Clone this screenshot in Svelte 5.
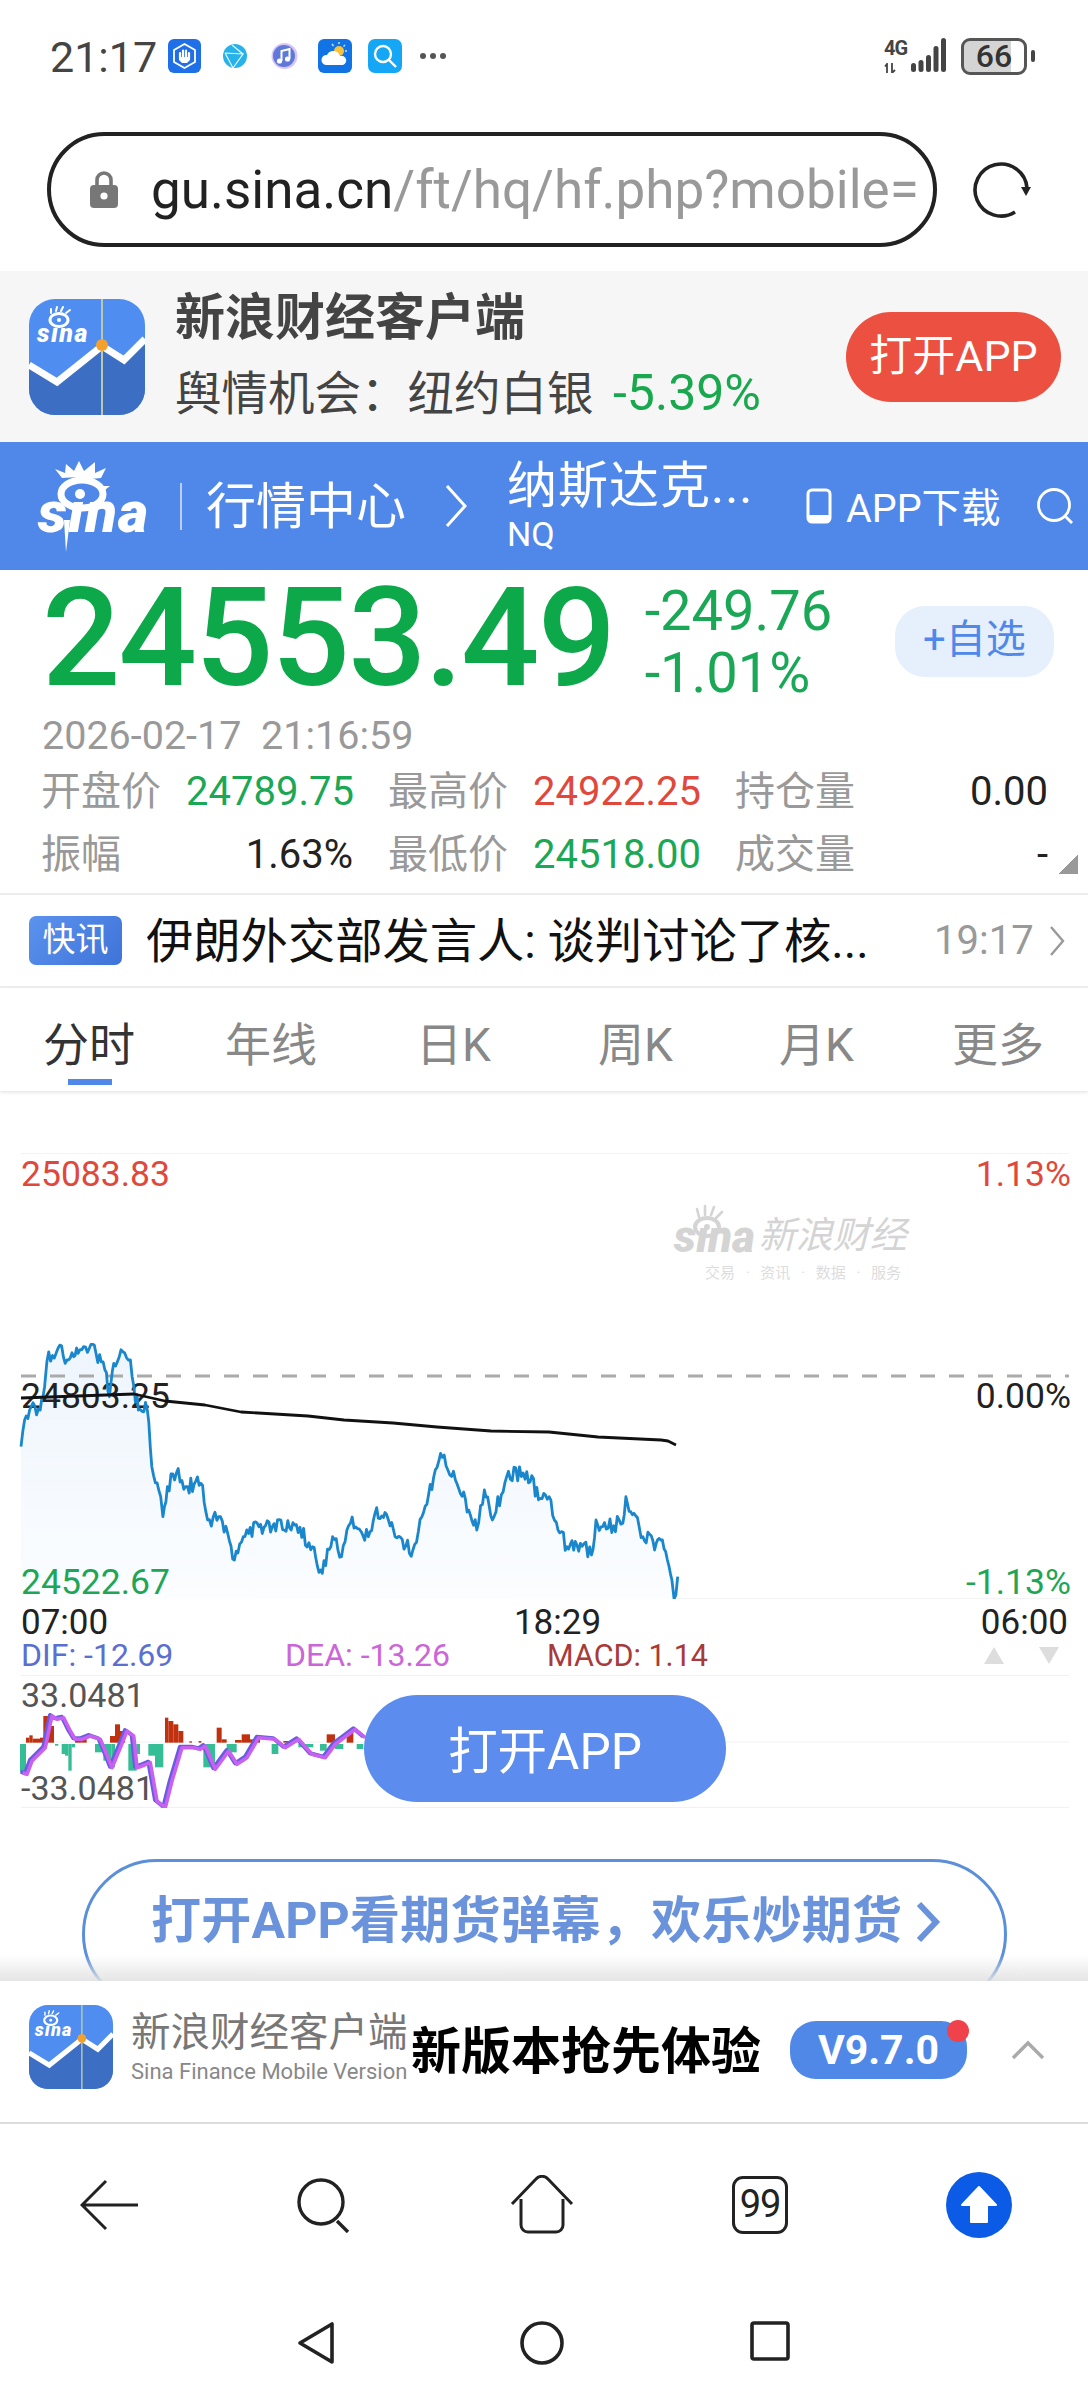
<script>
  // ---- price line, traced from the reference (trace units: x/2.24, y/3 + offset)
  const blueKeys = [[47,380],[55,300],[70,260],[90,270],[100,200],[105,125],[130,85],[150,120],[165,110],[175,100],[200,85],[215,100],[235,150],[245,230],[255,130],[275,95],[292,120],[300,200],[310,270],[330,270],[340,440],[360,530],[365,590],[375,500],[395,460],[420,500],[450,490],[465,600],[490,590],[510,640],[525,720],[545,650],[580,620],[610,620],[660,615],[700,680],[722,760],[745,650],[765,710],[785,610],[825,650],[840,580],[870,600],[885,650],[925,690],[945,590],[975,450],[995,405],[1020,480],[1050,570],[1068,630],[1085,510],[1103,600],[1135,470],[1180,455],[1210,535],[1230,530],[1250,630],[1270,680],[1300,670],[1325,705],[1335,600],[1350,620],[1395,610],[1402,530],[1420,580],[1440,650],[1470,670],[1480,660],[1495,720],[1505,780],[1510,840],[1518,770]];
  let seed = 48271;
  const rnd = () => { seed = (seed * 16807) % 2147483647; return seed / 2147483647; };
  const pts = [];
  for (let i = 0; i < blueKeys.length - 1; i++) {
    const [x0, y0] = blueKeys[i];
    const [x1, y1] = blueKeys[i + 1];
    const n = Math.max(1, Math.round((x1 - x0) / 4));
    for (let j = 0; j < n; j++) {
      const t = j / n;
      const jitter = j === 0 ? 0 : (rnd() - 0.5) * 48;
      pts.push([x0 + (x1 - x0) * t, y0 + (y1 - y0) * t + jitter]);
    }
  }
  pts.push(blueKeys[blueKeys.length - 1]);
  // price chart svg spans page y 1153..1599, x 0..1088
  const map = ([x, y]) => [(x / 2.24).toFixed(1), Math.min(y / 3 + 1320 - 1153, 446).toFixed(1)];
  const bluePath = pts.map(map).map((p) => p.join(',')).join(' ');
  const fillPath = `21,446 ${bluePath} 678,446`;
  const blackLine = [[21,245],[134,241],[165,248],[205,252],[241,259],[308,263],[344,267],[393,270],[437,274],[491,278],[549,279],[598,284],[661,287],[668,288],[676,292]].map((p) => p.join(',')).join(' ');

  // MACD, traced in units x/3, y/3 within an svg from page y 1675
  const redBars = [[78,88,15],[88,98,22],[98,120,12],[120,130,15],[130,150,80],[150,162,50],[225,245,8],[245,260,12],[330,345,20],[345,360,55],[360,375,35],[495,505,75],[505,520,65],[520,535,55],[535,550,35],[568,576,4],[596,604,5],[650,665,45],[665,680,10],[705,725,8],[725,750,25],[750,780,10],[850,870,5],[980,1005,25],[1040,1060,35]];
  const tealBars = [[60,78,85],[165,175,5],[185,195,30],[195,205,35],[205,215,80],[215,225,10],[285,310,25],[310,335,50],[335,345,70],[385,410,80],[410,420,30],[445,465,35],[465,490,70],[610,645,70],[680,710,25],[815,835,30],[895,940,10],[960,980,20],[1005,1030,15],[1070,1090,15]];
  const macdLine = [[62,395],[75,400],[90,360],[130,320],[150,225],[165,235],[185,230],[205,270],[220,295],[240,295],[265,285],[295,295],[310,330],[330,380],[355,320],[375,270],[395,285],[405,380],[420,375],[445,365],[465,480],[490,500],[510,420],[540,320],[575,320],[595,325],[610,315],[640,385],[680,330],[705,370],[735,350],[770,290],[820,295],[850,320],[890,295],[930,340],[970,350],[1000,310],[1060,265],[1090,290]];
  const my = (y) => (y / 3 + 1640 - 1675).toFixed(1);
  const base = 308;
  const dif = macdLine.map(([x, y]) => `${(x / 3).toFixed(1)},${my(y)}`).join(' ');
  const dea = macdLine.map(([x, y]) => `${(x / 3 + 2).toFixed(1)},${my(y + 3)}`).join(' ');

  const tabs = ['分时', '年线', '日K', '周K', '月K', '更多'];
</script>

{#snippet appIcon()}
  <svg class="appicon" viewBox="0 0 116 116">
    <defs>
      <clipPath id="ic"><rect width="116" height="116" rx="26" /></clipPath>
    </defs>
    <g clip-path="url(#ic)">
      <rect width="116" height="116" fill="#4f8df0" />
      <path d="M0 68 L28 84 L73 47 L95 61 L116 40 V116 H0Z" fill="#3c6fc3" />
      <path d="M0 66 L28 83 L73 47 L95 61 L116 40" fill="none" stroke="#fff" stroke-width="7" />
      <rect x="72" width="2" height="116" fill="#b9c9b0" />
      <circle cx="73" cy="46" r="6" fill="#f2a12c" />
      <ellipse cx="30" cy="21" rx="9" ry="6.5" fill="none" stroke="#fff" stroke-width="3" />
      <circle cx="30" cy="21" r="2" fill="#fff" />
      <path d="M22 14 L22 10 M27 12 L28 8 M32 12 L34 8 M37 14 L41 11" stroke="#fff" stroke-width="2" stroke-linecap="round" />
      <text x="8" y="43" class="icontext">sına</text>
    </g>
  </svg>
{/snippet}

{#snippet sinaLogo()}
  <div class="logo">
    <svg class="eye" viewBox="0 0 108 93">
      <ellipse cx="44" cy="34" rx="21" ry="14" fill="none" stroke="#fff" stroke-width="7" />
      <circle cx="42" cy="34" r="5" fill="#fff" />
      <path d="M24 18 L17 9 L27 13 L28 4 L36 11 L41 1 L46 11 L57 2 L57 13 L68 8 L63 18 L52 19 L40 17Z M64 26 L72 26 L63 33Z" fill="#fff" />
      <path d="M26 60 H32 L28 92Z" fill="#fff" />
    </svg>
    <span class="logotext">sına</span>
  </div>
{/snippet}

<div class="page">
  <header class="status">
    <span class="time">21:17</span>
    <div class="noti">
      <svg class="n1" width="33" height="34" viewBox="0 0 33 34"><rect width="33" height="34" rx="6" fill="#1f6fe8" /><path d="M16.5 5 L27 11 V23 L16.5 29 L6 23 V11Z" fill="none" stroke="#fff" stroke-width="1.8" /><path d="M12 20 V14 M15 20 V11.5 M18 20 V11.5 M21 20 V14" stroke="#fff" stroke-width="2.2" stroke-linecap="round" /><path d="M11 18 H22 V21 L19 24 H14 L11 21Z" fill="#fff" /></svg>
      <svg class="n2" width="24" height="26" viewBox="0 0 24 26"><circle cx="12" cy="13" r="12" fill="#27b3ea" /><path d="M2 10 L20 11 L10 25 M9 2 L20 11 M2 10 L10 25" stroke="#e8f8ff" stroke-width="1.2" fill="none" /></svg>
      <svg class="n3" width="27" height="26" viewBox="0 0 27 26"><circle cx="13.5" cy="13" r="13" fill="#d9c6f5" /><circle cx="13" cy="13" r="11" fill="#5f79d8" /><path d="M10.5 18 V8 L18.5 6 V16" stroke="#fff" stroke-width="2" fill="none" /><circle cx="8.5" cy="18" r="2.6" fill="#fff" /><circle cx="16.5" cy="16" r="2.6" fill="#fff" /></svg>
      <svg class="n4" width="34" height="34" viewBox="0 0 34 34"><rect width="34" height="34" rx="6" fill="#1274e4" /><circle cx="21" cy="12" r="5" fill="#f8c23a" /><path d="M21 3 V5 M29 12 H27 M27 6 L25.5 7.5 M14 5 L15.5 7" stroke="#cfe4fa" stroke-width="1.4" /><path d="M8 26 a5 5 0 0 1 1 -10 a7 7 0 0 1 13 1 a4.5 4.5 0 0 1 3 9Z" fill="#fff" /></svg>
      <svg class="n5" width="34" height="34" viewBox="0 0 34 34"><rect width="34" height="34" rx="7" fill="#15a6f5" /><circle cx="15" cy="15" r="8" fill="none" stroke="#fff" stroke-width="2.4" /><path d="M21 21 L28 28" stroke="#fff" stroke-width="2.4" /></svg>
      <span class="dots"><i></i><i></i><i></i></span>
    </div>
    <div class="sys">
      <div class="net"><span>4G</span><svg width="24" height="10" viewBox="0 0 24 10"><path d="M3 10 V1 L1 3.5 M8 0 V10 L11 7" stroke="#444" stroke-width="1.8" fill="none" /></svg></div>
      <svg class="bars" width="36" height="34" viewBox="0 0 36 34"><rect x="0" y="25" width="5" height="9" rx="2.5" fill="#444" /><rect x="7.5" y="22" width="5" height="12" rx="2.5" fill="#444" /><rect x="15" y="17" width="5" height="17" rx="2.5" fill="#444" /><rect x="22.5" y="8" width="5" height="26" rx="2.5" fill="#444" /><rect x="30" y="0" width="5" height="34" rx="2.5" fill="#444" /></svg>
      <div class="batt"><span>66</span></div><i class="nub"></i>
    </div>
  </header>

  <div class="urlrow">
    <div class="urlbar">
      <svg class="lock" width="28" height="37" viewBox="0 0 28 37"><path d="M7 16 V9 a7 7 0 0 1 14 0 V16" fill="none" stroke="#777" stroke-width="3.6" /><rect y="14" width="28" height="23" rx="4" fill="#777" /><circle cx="14" cy="25" r="3.6" fill="#fff" /></svg>
      <span class="url"><b>gu.sina.cn</b>/ft/hq/hf.php?mobile=</span>
    </div>
    <svg class="reload" width="60" height="60" viewBox="0 0 60 60"><path d="M56 28 A26 26 0 1 0 44 52" fill="none" stroke="#222" stroke-width="3.6" /><path d="M50 27 L60 27 L55 36Z" fill="#222" /></svg>
  </div>

  <section class="banner">
    {@render appIcon()}
    <div class="bannertext">
      <div class="btitle">新浪财经客户端</div>
      <div class="bsub">舆情机会：纽约白银 <em>-5.39%</em></div>
    </div>
    <div class="openred">打开APP</div>
  </section>

  <nav class="bluenav">
    {@render sinaLogo()}
    <i class="vdiv"></i>
    <span class="crumb">行情中心</span>
    <svg class="cchev" width="24" height="44" viewBox="0 0 24 44"><path d="M3 2 L21 22 L3 42" fill="none" stroke="#fff" stroke-width="3" /></svg>
    <div class="crumbname"><div class="cn">纳斯达克...</div><div class="nq">NQ</div></div>
    <svg class="phone" width="26" height="36" viewBox="0 0 26 36"><rect x="2" y="2" width="22" height="32" rx="4" fill="none" stroke="#fff" stroke-width="3" /><rect x="2" y="27" width="22" height="7" fill="#fff" /></svg>
    <span class="dl">APP下载</span>
    <svg class="nsearch" width="38" height="38" viewBox="0 0 38 38"><circle cx="18" cy="18" r="15.5" fill="none" stroke="#fff" stroke-width="2.8" /><path d="M29 29 L36 36" stroke="#fff" stroke-width="2.8" /></svg>
  </nav>

  <section class="quote">
    <div class="qtop">
      <div class="bignum">24553.49</div>
      <div class="delta"><div>-249.76</div><div>-1.01%</div></div>
      <div class="addbtn">+自选</div>
    </div>
    <div class="stamp">2026-02-17&nbsp;&nbsp;21:16:59</div>
    <div class="stats">
      <span class="k">开盘价</span><span class="v g">24789.75</span>
      <span class="k">最高价</span><span class="v r">24922.25</span>
      <span class="k">持仓量</span><span class="v">0.00</span>
      <span class="k">振幅</span><span class="v">1.63%</span>
      <span class="k">最低价</span><span class="v g">24518.00</span>
      <span class="k">成交量</span><span class="v">-</span>
    </div>
    <i class="corner"></i>
  </section>

  <section class="news">
    <span class="flash">快讯</span>
    <span class="headline">伊朗外交部发言人: 谈判讨论了核...</span>
    <span class="ntime">19:17</span>
    <svg width="16" height="32" viewBox="0 0 16 32"><path d="M2 2 L14 16 L2 30" fill="none" stroke="#999" stroke-width="2.4" /></svg>
  </section>

  <div class="tabs">
    {#each tabs as t, i}
      <div class="tab" class:on={i === 0}>{t}</div>
    {/each}
  </div>

  <section class="chartarea">
    <div class="pricechart">
      <svg class="layer" width="1088" height="446" viewBox="0 0 1088 446">
        <defs>
          <linearGradient id="fade" x1="0" y1="0" x2="0" y2="1"><stop offset="0" stop-color="#eef5fd" /><stop offset="1" stop-color="#fbfdff" /></linearGradient>
        </defs>
        <path d="M21 .5 H1069 M21 445.5 H1069" stroke="#f3f3f3" fill="none" />
        <polygon points={fillPath} fill="url(#fade)" />
        <path d="M21 223 H1069" stroke="#aaa" stroke-width="3" stroke-dasharray="15 14" />
      </svg>
      <div class="wm">
        <svg class="wmeye" width="36" height="36" viewBox="0 0 36 36"><ellipse cx="17" cy="23" rx="12" ry="9" fill="none" stroke="#d4d4d4" stroke-width="4" /><circle cx="17" cy="23" r="3" fill="#d4d4d4" /><path d="M9 13 L7 5 M15 11 L15 2 M21 11 L24 3 M26 14 L32 8" stroke="#d4d4d4" stroke-width="2.6" stroke-linecap="round" /></svg>
        <div class="wm1"><span class="wmlogo">sına</span><span class="wmcn">新浪财经</span></div>
        <div class="wm2">交易 · 资讯 · 数据 · 服务</div>
      </div>
      <div class="ylabels">
        <div class="yrow red"><span>25083.83</span><span>1.13%</span></div>
        <div class="yrow mid"><span>24803.25</span><span>0.00%</span></div>
        <div class="yrow grn"><span>24522.67</span><span>-1.13%</span></div>
      </div>
      <svg class="layer" width="1088" height="446" viewBox="0 0 1088 446">
        <polyline points={bluePath} fill="none" stroke="#1a86cc" stroke-width="2.8" stroke-linejoin="round" />
        <polyline points={blackLine} fill="none" stroke="#111" stroke-width="2.8" stroke-linejoin="round" />
      </svg>
    </div>
    <div class="xaxis"><span>07:00</span><span class="xm">18:29</span><span>06:00</span></div>
    <div class="legend">
      <span class="dif">DIF: -12.69</span><span class="dea">DEA: -13.26</span><span class="macd">MACD: 1.14</span>
      <i class="up"></i><i class="down"></i>
    </div>
    <div class="macdchart">
      <div class="mlabels"><span>33.0481</span><span>-33.0481</span></div>
      <svg class="layer" width="1088" height="133" viewBox="0 0 1088 133">
        <path d="M21 .5 H1069 M21 132.5 H1069 M21 67 H1069" stroke="#f1f1f1" fill="none" />
        {#each redBars as [a, b, h]}
          <rect x={a / 3} y={(base - h) / 3 + 1640 - 1675} width={(b - a) / 3} height={h / 3} fill="#c0320f" />
        {/each}
        {#each tealBars as [a, b, h]}
          <rect x={a / 3} y={(base + 4) / 3 + 1640 - 1675} width={(b - a) / 3} height={h / 3} fill="#35bd96" />
        {/each}
        <polyline points={dif} fill="none" stroke="#6a5ce0" stroke-width="4" stroke-linejoin="round" />
        <polyline points={dea} fill="none" stroke="#c860f0" stroke-width="3.6" stroke-linejoin="round" />
      </svg>
      <div class="openblue">打开APP</div>
    </div>
    <div class="promo">
      <span>打开APP看期货弹幕，欢乐炒期货</span>
      <svg width="26" height="42" viewBox="0 0 26 42"><path d="M4 3 L21 21 L4 39" fill="none" stroke="#6a93dc" stroke-width="6" /></svg>
    </div>
    <div class="fadeedge"></div>
  </section>

  <section class="appstrip">
    {@render appIcon()}
    <div class="striptext">
      <div class="s1">新浪财经客户端</div>
      <div class="s2">Sina Finance Mobile Version</div>
    </div>
    <div class="s3">新版本抢先体验</div>
    <div class="ver">V9.7.0<i></i></div>
    <svg class="sup" width="34" height="20" viewBox="0 0 34 20"><path d="M2 18 L17 3 L32 18" fill="none" stroke="#aaa" stroke-width="3.4" /></svg>
  </section>

  <footer class="browsernav">
    <svg width="58" height="52" viewBox="0 0 58 52"><path d="M26 2 L2 26 L26 50 M2 26 H58" fill="none" stroke="#222" stroke-width="3" /></svg>
    <svg width="56" height="56" viewBox="0 0 56 56"><circle cx="25" cy="25" r="22" fill="none" stroke="#222" stroke-width="3.4" /><path d="M41 44 L52 55" stroke="#222" stroke-width="3.4" /></svg>
    <svg width="64" height="60" viewBox="0 0 64 60"><path d="M2 29 L26 4 a8 8 0 0 1 12 0 L62 29 M11 24 V50 a7 7 0 0 0 7 7 H46 a7 7 0 0 0 7 -7 V24" fill="none" stroke="#222" stroke-width="3" stroke-linejoin="round" /></svg>
    <div class="tabsbtn">99</div>
    <svg width="66" height="66" viewBox="0 0 66 66"><circle cx="33" cy="33" r="33" fill="#0b5be6" /><path d="M33 15 L50 33 H41 V50 H25 V33 H16Z" fill="#fff" stroke="#fff" stroke-width="2" stroke-linejoin="round" /></svg>
  </footer>

  <div class="androidnav">
    <svg width="37" height="44" viewBox="0 0 37 44"><path d="M35 3 V41 L3 22Z" fill="none" stroke="#222" stroke-width="3.6" stroke-linejoin="round" /></svg>
    <svg width="44" height="44" viewBox="0 0 44 44"><circle cx="22" cy="22" r="20" fill="none" stroke="#222" stroke-width="3.6" /></svg>
    <svg width="40" height="40" viewBox="0 0 40 40"><rect x="2" y="2" width="36" height="36" rx="2" fill="none" stroke="#222" stroke-width="3.6" /></svg>
  </div>
</div>

<style>
  :global(body) { margin: 0; background: #fff; }
  .page {
    width: 1088px; height: 2400px; overflow: hidden; background: #fff;
    font-family: Roboto, "Noto Sans CJK SC", sans-serif; color: #222;
    display: flex; flex-direction: column;
  }
  .page > * { flex: none; box-sizing: border-box; }
  i { display: block; font-style: normal; }

  /* status */
  .status { height: 88px; padding: 36px 53px 0 50px; display: flex; align-items: flex-start; }
  .time { font-size: 43px; line-height: 42px; color: #444; width: 118px; }
  .noti { display: flex; align-items: center; height: 36px; margin-top: 2px; }
  .n1 { margin-right: 22px; }
  .n2 { margin-right: 24px; }
  .n3 { margin-right: 20px; }
  .n4 { margin-right: 16px; }
  .n5 { margin-right: 18px; }
  .dots { display: flex; gap: 4px; }
  .dots i { width: 6px; height: 6px; border-radius: 50%; background: #555; }
  .sys { margin-left: auto; display: flex; align-items: flex-start; padding-top: 2px; }
  .net { width: 27px; font-size: 20px; font-weight: 700; line-height: 20px; color: #444; letter-spacing: -1px; white-space: nowrap; }
  .net svg { display: block; margin-top: 5px; }
  .bars { margin-right: 14px; }
  .batt { width: 66px; height: 37px; box-sizing: border-box; border: 3px solid #555; border-radius: 9px; background: linear-gradient(90deg, #d4d4d4 78%, #fff 78%); background-clip: padding-box; font-size: 32px; font-weight: 500; line-height: 31px; text-align: center; color: #333; }
  .nub { width: 4px; height: 12px; margin: 12px 0 0 4px; border-radius: 2px; background: #444; }

  /* url */
  .urlrow { height: 183px; display: flex; align-items: center; padding: 20px 0 0 47px; }
  .urlbar { width: 890px; height: 115px; box-sizing: border-box; border: 4px solid #222; border-radius: 58px; display: flex; align-items: center; padding-left: 39px; }
  .lock { flex: none; }
  .url { margin-left: 33px; font-size: 53px; color: #999; white-space: nowrap; font-weight: 400; }
  .url b { font-weight: 400; color: #222; }
  .reload { margin-left: 34px; }

  /* banner */
  .banner { height: 171px; background: #f6f6f6; display: flex; align-items: center; padding: 0 27px 0 29px; }
  .banner .appicon { width: 116px; height: 116px; flex: none; }
  .appicon { display: block; }
  .icontext { font: italic 900 25px Roboto, sans-serif; fill: #fff; letter-spacing: 1.5px; }
  .bannertext { margin-left: 30px; }
  .btitle { font-size: 50px; font-weight: 700; line-height: 66px; color: #444; }
  .bsub { font-size: 46.5px; line-height: 70px; color: #444; white-space: nowrap; margin-top: 7px; }
  .bsub em { font-style: normal; color: #19a84d; font-size: 50px; margin-left: 8px; }
  .openred { margin-left: auto; width: 215px; height: 90px; border-radius: 45px; background: #ec5040; color: #fff; font-size: 43px; line-height: 88px; text-align: center; }

  /* blue nav */
  .bluenav { height: 128px; background: #5088ea; color: #fff; display: flex; align-items: center; padding-left: 38px; }
  .logo { width: 110px; height: 93px; position: relative; flex: none; }
  .eye { position: absolute; left: 0; top: 0; width: 108px; height: 93px; }
  .logotext { position: absolute; left: 0; top: 23px; font: italic 900 58px/58px Roboto, sans-serif; color: #fff; letter-spacing: 1.2px; white-space: nowrap; }
  .vdiv { width: 2px; height: 47px; background: rgba(255,255,255,.6); margin-left: 32px; }
  .crumb { margin-left: 24px; font-size: 50px; width: 238px; white-space: nowrap; padding-bottom: 8px; }
  .cchev { margin-right: 39px; }
  .crumbname { width: 299px; }
  .cn { font-size: 50px; line-height: 56px; white-space: nowrap; letter-spacing: 1px; }
  .nq { font-size: 34px; line-height: 40px; }
  .dl { font-size: 39.5px; margin-left: 14px; width: 190px; white-space: nowrap; padding-bottom: 4px; }

  /* quote */
  .quote { height: 325px; border-bottom: 2px solid #ececec; padding: 0 34px 0 42px; position: relative; }
  .qtop { height: 136px; display: flex; align-items: flex-start; }
  .bignum { font-size: 138px; line-height: 136px; font-weight: 500; color: #0da84a; width: 600px; letter-spacing: -1.9px; white-space: nowrap; }
  .delta { font-size: 56px; line-height: 62px; color: #1aa857; width: 256px; padding: 10px 0 0 5px; box-sizing: border-box; }
  .addbtn { width: 160px; height: 71px; margin-top: 36px; border-radius: 30px; background: #e6effc; color: #5088ea; font-size: 40px; line-height: 68px; text-align: center; }
  .stamp { font-size: 39.5px; line-height: 44px; color: #999; margin-top: 8px; }
  .stats { display: grid; grid-template-columns: 144px 203px 144px 203px 144px 168px; margin-top: 2px; font-size: 40px; line-height: 63px; }
  .k { color: #999; font-size: 40px; white-space: nowrap; margin-left: -1px; }
  .v { text-align: right; padding-right: 36px; color: #222; white-space: nowrap; }
  .v:nth-child(6n) { padding-right: 0; }
  .v.g { color: #1aa857; }
  .v.r { color: #e0483c; }
  .corner { position: absolute; right: 10px; bottom: 19px; width: 19px; height: 19px; background: linear-gradient(135deg, transparent 50%, #999 50%); }

  /* news */
  .news { height: 93px; display: flex; align-items: center; padding-left: 29px; border-bottom: 2px solid #ececec; }
  .flash { width: 93px; height: 49px; border-radius: 7px; background: linear-gradient(135deg, #5b93ee, #3f73d8); color: #fff; font-size: 33px; line-height: 48px; text-align: center; flex: none; }
  .headline { margin-left: 24px; width: 788px; font-size: 47.3px; color: #111; white-space: nowrap; padding-bottom: 6px; }
  .ntime { font-size: 40px; color: #999; width: 115px; }

  /* tabs */
  .tabs { height: 103px; padding-left: 43px; display: grid; grid-template-columns: 182px 191px 182px 181px 173px auto; box-shadow: 0 2px 3px #e9e9e9; position: relative; }
  .tab { font-size: 46px; line-height: 114px; color: #888; position: relative; height: 101px; white-space: nowrap; }
  .tab.on { color: #333; }
  .tab.on::after { content: ''; position: absolute; left: 25px; width: 44px; bottom: 4px; height: 6px; background: #5088ea; }

  /* charts */
  .chartarea { height: 890px; padding-top: 62px; position: relative; overflow: hidden; }
  .pricechart { height: 446px; position: relative; }
  .layer { position: absolute; left: 0; top: 0; }
  .ylabels { position: relative; padding: 0 17px 0 21px; font-size: 35.5px; line-height: 40px; height: 446px; display: flex; flex-direction: column; }
  .yrow { display: flex; justify-content: space-between; }
  .red { color: #e0483c; margin-top: 1px; }
  .mid { color: #222; margin-top: 182px; }
  .grn { color: #1ea656; margin-top: 146px; }
  .wm { position: absolute; left: 674px; top: 52px; color: #d4d4d4; width: 240px; }
  .wmeye { position: absolute; left: 16px; top: -1px; }
  .wm1 { display: flex; align-items: flex-end; height: 56px; padding-top: 2px; box-sizing: border-box; }
  .wmlogo { font: italic 900 44px/48px Roboto, sans-serif; }
  .wmcn { font-size: 37px; line-height: 50px; font-style: italic; margin-left: 4px; white-space: nowrap; }
  .wm2 { font-size: 15px; line-height: 18px; margin: 3px 0 0 31px; color: #ddd; word-spacing: 7px; white-space: nowrap; }
  .xaxis { height: 37px; padding: 0 20px 0 21px; display: flex; justify-content: space-between; font-size: 35px; line-height: 48px; color: #222; }
  .xm { margin-left: 26px; }
  .legend { height: 39px; padding: 0 29px 0 21px; display: flex; align-items: center; font-size: 32px; line-height: 39px; }
  .dif { color: #5b6fd0; width: 264px; }
  .dea { color: #cc66d8; width: 262px; }
  .macd { color: #a83a3a; font-size: 30.5px; }
  .up, .down { width: 0; height: 0; border-left: 10px solid transparent; border-right: 10px solid transparent; }
  .up { border-bottom: 17px solid #ddd; margin-left: auto; }
  .down { border-top: 17px solid #ddd; margin-left: 35px; }
  .macdchart { height: 133px; position: relative; }
  .mlabels { position: relative; padding: 3px 0 0 21px; height: 130px; display: flex; flex-direction: column; justify-content: space-between; font-size: 34px; line-height: 34px; color: #555; align-items: flex-start; box-sizing: border-box; }
  .openblue { position: absolute; left: 364px; top: 20px; width: 362px; height: 107px; border-radius: 54px; background: #5b8cee; color: #fff; font-size: 49.5px; line-height: 114px; text-align: center; }
  .promo { width: 925px; height: 150px; box-sizing: border-box; margin: 51px 0 0 82px; border: 3px solid #5b8fd9; border-radius: 75px; display: flex; align-items: flex-start; padding: 29px 0 0 66px; }
  .promo span { font-size: 50px; line-height: 60px; font-weight: 700; color: #6a93dc; white-space: nowrap; width: 764px; letter-spacing: .2px; }
  .promo svg { margin-top: 10px; }
  .fadeedge { position: absolute; left: 0; right: 0; bottom: 0; height: 26px; background: linear-gradient(rgba(230,230,230,0), rgba(226,226,226,.9)); }

  /* strip */
  .appstrip { height: 143px; border-bottom: 2px solid #ddd; display: flex; align-items: center; padding: 0 43px 9px 29px; }
  .appstrip .appicon { width: 84px; height: 84px; flex: none; }
  .striptext { margin-left: 18px; width: 280px; }
  .s1 { font-size: 39.5px; line-height: 48px; color: #777; white-space: nowrap; }
  .s2 { font-size: 22px; line-height: 26px; color: #888; white-space: nowrap; margin-top: 2px; }
  .s3 { font-size: 50px; font-weight: 700; color: #000; white-space: nowrap; width: 379px; }
  .ver { width: 177px; height: 58px; border-radius: 26px; background: #5088e8; color: #fff; font-size: 41px; font-weight: 700; line-height: 58px; text-align: center; position: relative; margin-top: 6px; }
  .ver i { position: absolute; right: -2px; top: -1px; width: 22px; height: 22px; border-radius: 50%; background: #f0424a; }
  .sup { margin-left: auto; margin-top: 6px; }

  /* browser nav */
  .browsernav { height: 156px; display: flex; align-items: center; justify-content: space-between; padding: 6px 76px 0 80px; }
  .tabsbtn { width: 56px; height: 58px; box-sizing: border-box; border: 3.4px solid #222; border-radius: 11px; font-size: 38px; line-height: 50px; text-align: center; color: #222; letter-spacing: -1px; }
  .androidnav { height: 120px; display: flex; align-items: flex-start; justify-content: space-between; padding: 41px 298px 0 297px; }
</style>
